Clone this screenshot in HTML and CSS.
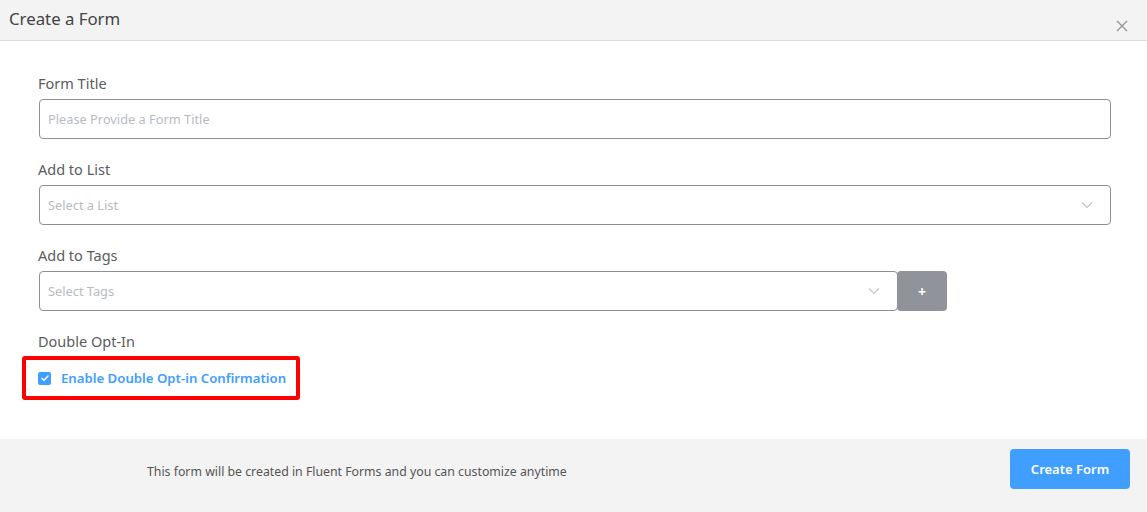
FILE: index.html
```html
<!DOCTYPE html>
<html>
<head>
<meta charset="utf-8">
<link rel="stylesheet" href="styles.css">
</head>
<body>
<div class="modal">
  <div class="header">
    <span class="title">Create a Form</span>
    <svg class="close" width="12" height="12" viewBox="0 0 12 12"><path d="M1 1L11 11M11 1L1 11" stroke="#909399" stroke-width="1.3" fill="none"/></svg>
  </div>
  <div class="body">
    <div class="field">
      <div class="label">Form Title</div>
      <div class="input"><span class="ph">Please Provide a Form Title</span></div>
    </div>
    <div class="field">
      <div class="label">Add to List</div>
      <div class="input select"><span class="ph">Select a List</span>
        <svg class="chev" width="12" height="8" viewBox="0 0 12 8"><path d="M1 1.5L6 6.5L11 1.5" stroke="#c0c4cc" stroke-width="1.1" fill="none"/></svg>
      </div>
    </div>
    <div class="field">
      <div class="label">Add to Tags</div>
      <div class="tagrow">
        <div class="input select tags"><span class="ph">Select Tags</span>
          <svg class="chev" width="12" height="8" viewBox="0 0 12 8"><path d="M1 1.5L6 6.5L11 1.5" stroke="#c0c4cc" stroke-width="1.1" fill="none"/></svg>
        </div>
        <div class="plus">+</div>
      </div>
    </div>
    <div class="field last">
      <div class="label">Double Opt-In</div>
      <div class="highlight">
        <span class="cb"><svg width="10" height="8" viewBox="0 0 10 8"><path d="M1.5 4L4 6.3L8.5 1.5" stroke="#fff" stroke-width="1.3" fill="none"/></svg></span>
        <span class="cbtext">Enable Double Opt-in Confirmation</span>
      </div>
    </div>
  </div>
  <div class="footer">
    <span class="note">This form will be created in Fluent Forms and you can customize anytime</span>
    <button class="create">Create Form</button>
  </div>
</div>
</body>
</html>
```
FILE: styles.css
```css
* { box-sizing: border-box; }
html, body { margin: 0; padding: 0; background: #fff; }
body { font-family: "Noto Sans", "Open Sans", sans-serif; color: #606266; width: 1147px; height: 512px; overflow: hidden; }
.modal { display: flex; flex-direction: column; height: 512px; }
.header { height: 41px; flex: none; background: #f3f3f3; border-bottom: 1px solid #dcdcdc; display: flex; align-items: center; justify-content: space-between; padding: 0 19px 0 9px; }
.title { font-size: 16.8px; color: #444; margin-top: -4px; }
.close { margin-top: 11px; }
.body { flex: 1; padding: 32px 36px 0 39px; }
.field { display: flex; flex-direction: column; margin-bottom: 20px; }
.label { font-size: 14.5px; color: #5a5c61; line-height: 20px; margin-bottom: 6px; margin-left: -1px; }
.last .label { margin-bottom: 5px; }
.input { height: 40px; border: 1px solid #8f9096; border-radius: 4px; display: flex; align-items: center; padding: 0 8px; }
.ph { font-size: 12.8px; color: #b8bbc2; }
.select { justify-content: space-between; padding-right: 17px; }
.tagrow { display: flex; width: 908px; }
.tags { flex: 1; }
.plus { width: 50px; height: 40px; background: #909399; color: #fff; border-radius: 4px; display: flex; align-items: center; justify-content: center; font-size: 14px; font-weight: bold; margin-left: -1px; }
.highlight { margin-left: -17px; width: 278px; height: 44px; border: 4px solid #ff0000; border-radius: 3px; display: flex; align-items: center; padding-left: 12px; }
.cb { width: 13px; height: 13px; background: #409eff; border-radius: 2px; display: flex; align-items: center; justify-content: center; }
.cbtext { margin-left: 10px; font-size: 13.2px; font-weight: 600; color: #409eff; }
.footer { height: 73px; flex: none; background: #f3f3f3; display: flex; align-items: flex-start; justify-content: space-between; padding: 0 17px 0 147px; }
.note { font-size: 12.3px; color: #555; line-height: 18px; margin-top: 24px; }
.create { width: 120px; height: 40px; background: #409eff; border: none; border-radius: 4px; color: #fff; font-family: inherit; font-size: 13px; font-weight: 600; margin-top: 10px; }
```
